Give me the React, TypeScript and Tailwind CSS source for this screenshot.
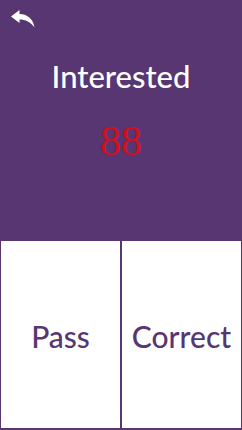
import React from 'react';

export default function App() {
  return (
    <div className="w-[242px] h-[430px] flex flex-col bg-[#573672] overflow-hidden">
      <div className="h-[241px] flex flex-col relative">
        <button className="absolute left-[11px] top-[10px] w-[24px] h-[18px]" aria-label="Back">
          <svg viewBox="0 0 24 18" width="24" height="18">
            <path d="M0 6.5 L8.5 0 L8.5 4 C16 4 22 8.5 23.5 17.5 C19.5 12 14.5 9.5 8.5 9.5 L8.5 13 Z" fill="#ffffff" />
          </svg>
        </button>
        <div className="pt-[57px] text-center text-white text-[31px] leading-[38px] font-medium font-['Lato',sans-serif]">
          Interested
        </div>
        <div className="mt-[24px] text-center text-[#d0101e] text-[42px] leading-[44px] font-['Liberation_Serif',serif]">
          88
        </div>
      </div>
      <div className="flex-1 flex gap-[2px] pl-[1px] pr-[1px] pb-[2px]">
        <button className="flex-1 bg-white flex items-center justify-center pt-[4px] text-[30px] font-medium text-[#573672] font-['Lato',sans-serif]">
          Pass
        </button>
        <button className="flex-1 bg-white flex items-center justify-center pt-[4px] text-[30px] font-medium text-[#573672] font-['Lato',sans-serif]">
          Correct
        </button>
      </div>
    </div>
  );
}
